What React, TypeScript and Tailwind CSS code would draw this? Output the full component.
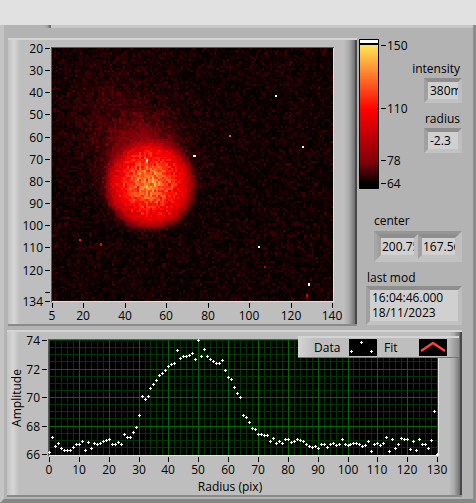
import React from 'react';

type Rgb = [number, number, number];

const COLOR_STOPS: { at: number; rgb: Rgb }[] = [
  { at: 64, rgb: [0, 0, 0] },
  { at: 78, rgb: [128, 0, 10] },
  { at: 110, rgb: [255, 0, 0] },
  { at: 150, rgb: [255, 232, 84] },
];

const colorFor = (value: number) => {
  if (value > 151) return 'rgb(255,255,255)';
  if (value <= 64) return 'rgb(0,0,0)';
  for (let i = 1; i < COLOR_STOPS.length; i++) {
    const a = COLOR_STOPS[i - 1];
    const b = COLOR_STOPS[i];
    if (value <= b.at) {
      const t = (value - a.at) / (b.at - a.at);
      return `rgb(${a.rgb.map((c, k) => Math.round(c + (b.rgb[k] - c) * t)).join(',')})`;
    }
  }
  return 'rgb(255,232,84)';
};

const COLS = 135;
const ROWS = 114;
const HOT_PIXELS: [number, number, number][] = [
  [107, 21, 160], [120, 44, 160], [68, 48, 160], [45, 50, 160], [99, 89, 160], [123, 106, 160],
  [13, 86, 115], [23, 88, 110], [102, 98, 95], [122, 111, 100], [85, 39, 124],
];

// Small seeded generator so that every frame shows the same noise
const createRandom = (seed: number) => () => {
  seed = (seed + 0x6d2b79f5) | 0;
  let t = Math.imul(seed ^ (seed >>> 15), 1 | seed);
  t = (t + Math.imul(t ^ (t >>> 7), 61 | t)) ^ t;
  return ((t ^ (t >>> 14)) >>> 0) / 4294967296;
};

const buildFrame = () => {
  const random = createRandom(18);
  const paths = new Map<number, string>();
  for (let row = 0; row < ROWS; row++) {
    for (let col = 0; col < COLS; col++) {
      const x = col * 2.08;
      const y = row * 2.22;
      const r = Math.hypot(x - 97, y - 136);
      const noise = random() + random() + random() - 1.5;
      const halo = 18 * Math.exp(-((x - 91) ** 2 + (y - 110) ** 2) / 1100);
      const haze = 4 * Math.exp(-((x - 62) ** 2 + (y - 66) ** 2) / 2400);
      const edge = 1 / (1 + Math.exp((r - 42) / 2.4));
      const disc = edge * (26 + 36 * Math.exp(-(r * r) / 1000));
      const gain = 4.4 + 0.13 * disc;
      let value = 65.8 + halo * (1 - edge * 0.7) + haze + disc + noise * gain;
      const hot = HOT_PIXELS.find(p => p[0] === col && p[1] === row);
      if (hot) value = hot[2];
      const level = Math.max(64, Math.round(value));
      const px = Math.round(x);
      const py = Math.round(y);
      const w = Math.round((col + 1) * 2.08) - px;
      const h = Math.round((row + 1) * 2.22) - py;
      paths.set(level, `${paths.get(level) ?? ''}M${px} ${py}h${w}v${h}h-${w}z`);
    }
  }
  paths.delete(64);
  return [...paths.entries()];
};

const frame = buildFrame();

// Radial profile, measured down from the top of the plot
const PROFILE = [
  112, 97, 106, 103, 108, 110, 110, 110, 107, 104, 104, 101, 110, 102, 108, 103, 104, 103, 101, 100,
  99, 104, 104, 102, 104, 94, 97, 97, 92, 87, 75, 56, 59, 56, 48, 44, 40, 35, 33, 30,
  26, 24, 23, 10, 18, 16, 16, 15, 13, 19, 0, 16, 9, 16, 19, 21, 23, 23, 20, 30,
  37, 39, 47, 53, 57, 75, 77, 82, 88, 89, 94, 94, 95, 95, 101, 98, 103, 101, 103, 99,
  99, 102, 101, 99, 100, 101, 104, 106, 107, 106, 108, 104, 104, 107, 104, 103, 105, 104, 99, 104,
  105, 104, 103, 103, 104, 106, 105, 101, 111, 104, 103, 105, 103, 97, 111, 99, 108, 104, 98, 99,
  99, 109, 101, 110, 99, 104, 104, 108, 100, 71, 114,
];

const marker = (x: number, y: number) => `M${x - 1} ${y}h3v1h-3zM${x} ${y - 1}h1v3h-1z`;

const Panel: React.FC<{ children: React.ReactNode }> = ({ children }) => (
  <div className="flex border-t-2 border-b-2 border-t-[#d4d4d4] border-b-[#8a8a8a] bg-[#bebebe]">
    <div className="w-3 shrink-0 bg-linear-to-r from-[#c2c2c2] via-[#d6d6d6] to-[#bebebe]" />
    <div className="min-w-0 flex-1">{children}</div>
    <div className="w-3.5 shrink-0 border-r-2 border-[#484848] bg-linear-to-r from-[#c2c2c2] via-[#aaaaaa] to-[#707070]" />
  </div>
);

const IntensityImage: React.FC = () => {
  const yTicks = [20, 30, 40, 50, 60, 70, 80, 90, 100, 110, 120, 130, 134];
  const xTicks = [5, 20, 40, 60, 80, 100, 120, 140];
  return (
    <svg viewBox="0 0 323 284" className="block w-full overflow-visible text-[12px]" shapeRendering="crispEdges" role="img">
      <rect x="31" y="7" width="283" height="255" fill="#5a5a5a" />
      <rect x="32" y="8" width="282" height="254" fill="#e6dede" />
      <rect x="32" y="8" width="281" height="253" fill="#000" />
      <g transform="translate(32 8)">
        {frame.map(([level, d]) => <path key={level} d={d} fill={colorFor(level)} />)}
      </g>
      {yTicks.map(v => {
        const y = Math.round(8 + (v - 20) * 2.215);
        return (
          <g key={v}>
            <rect x="25" y={y} width="5" height="1" />
            {v !== 130 && <text x="23" y={y + 5} textAnchor="end">{v}</text>}
          </g>
        );
      })}
      {xTicks.map(v => {
        const x = Math.round(32 + (v - 5) * 2.075);
        return (
          <g key={v}>
            <rect x={x} y="263" width="1" height="5" />
            <text x={x} y="280" textAnchor="middle">{v}</text>
          </g>
        );
      })}
    </svg>
  );
};

const ColorScale: React.FC = () => {
  const ticks = [{ v: 150, y: 6 }, { v: 110, y: 69 }, { v: 78, y: 121 }, { v: 64, y: 144 }];
  return (
    <svg width="50" height="151" viewBox="0 0 50 151" className="block shrink-0 overflow-visible text-[12px]" shapeRendering="crispEdges" role="img">
      <defs>
        <linearGradient id="ramp" x1="0" y1="0" x2="0" y2="1">
          <stop offset="0" stopColor="#ffe854" />
          <stop offset="0.45" stopColor="#ff0000" />
          <stop offset="0.82" stopColor="#80000a" />
          <stop offset="0.97" stopColor="#000" />
        </linearGradient>
      </defs>
      <rect width="20" height="150" />
      <rect x="1" y="1" width="18" height="3" fill="#fff" />
      <rect x="1" y="6" width="18" height="143" fill="url(#ramp)" />
      {ticks.map(({ v, y }) => (
        <g key={v}>
          <rect x="22" y={y} width="5" height="1" />
          <text x="28" y={y + 5}>{v}</text>
        </g>
      ))}
    </svg>
  );
};

const ProfileChart: React.FC = () => {
  const minorX = Array.from({ length: 65 }, (_, i) => i * 2);
  const minorY = Array.from({ length: 16 }, (_, i) => i);
  const xTicks = Array.from({ length: 14 }, (_, i) => i * 10);
  const toX = (v: number) => Math.round(30 + v * 2.985);
  const toY = (i: number) => Math.round(8 + i * 7.13);
  return (
    <svg viewBox="0 0 429 163" className="block w-full overflow-visible text-[12px]" shapeRendering="crispEdges" role="img">
      <rect x="29" y="7" width="391" height="117" fill="#5a5a5a" />
      <rect x="30" y="8" width="390" height="116" fill="#e4e4e4" />
      <rect x="30" y="8" width="389" height="115" fill="#000" />
      {minorX.map(v => <rect key={v} x={toX(v)} y="8" width="1" height="115" fill="#003600" />)}
      {minorY.map(i => <rect key={i} x="30" y={toY(i)} width="389" height="1" fill="#003600" />)}
      {xTicks.map(v => <rect key={v} x={toX(v)} y="8" width="1" height="115" fill="#006a00" />)}
      {[4, 8, 12].map(i => <rect key={i} x="30" y={toY(i)} width="389" height="1" fill="#006a00" />)}
      <path d={PROFILE.map((y, i) => marker(toX(i), y + 8)).join('')} fill="#fff" />
      {[74, 72, 70, 68, 66].map((v, i) => (
        <g key={v}>
          <rect x="23" y={toY(i * 4)} width="5" height="1" />
          <text x="21" y={toY(i * 4) + 5} textAnchor="end">{v}</text>
        </g>
      ))}
      {xTicks.map(v => (
        <g key={v}>
          <rect x={toX(v)} y="125" width="1" height="5" />
          <text x={toX(v)} y="142" textAnchor="middle">{v}</text>
        </g>
      ))}
      <text x="211" y="159" textAnchor="middle">Radius (pix)</text>
      <text transform="translate(2 66) rotate(-90)" textAnchor="middle">Amplitude</text>
    </svg>
  );
};

const Legend: React.FC = () => (
  <div className="absolute top-1.5 right-[3px] flex h-[22px] w-[161px] items-center border-t-2 border-b border-t-[#d4d4d4] border-b-[#777777] bg-linear-to-r from-[#d4d4d4] via-[#bebebe] via-10% to-[#bebebe] pl-4">
    <span className="w-[35px]">Data</span>
    <svg width="28" height="17" viewBox="0 0 28 17" shapeRendering="crispEdges">
      <rect width="28" height="17" />
      <path d={marker(2, 12) + marker(12, 3) + marker(22, 12)} fill="#fff" />
    </svg>
    <span className="w-[42px] pl-[7px]">Fit</span>
    <svg width="28" height="17" viewBox="0 0 28 17">
      <rect width="28" height="17" />
      <path d="M2 12L14 4L26 12" fill="none" stroke="#ff4040" strokeWidth="2.5" />
    </svg>
    <div className="ml-px h-full flex-1 bg-linear-to-r from-[#bebebe] to-[#8c8c8c]" />
  </div>
);

const fieldClass = 'block border-4 border-t-[#8e8e8e] border-l-[#a0a0a0] border-r-[#bebebe] border-b-[#c2c2c2] bg-[#d0d0d0] text-[12px] text-black outline-none';

const NumberField: React.FC<{ id: string; label: string; value: string }> = ({ id, label, value }) => (
  <div className="flex flex-col items-end">
    <label htmlFor={id} className="pr-0.5 leading-4">{label}</label>
    <input id={id} readOnly defaultValue={value} className={`${fieldClass} mt-px h-[25px] w-[38px] pl-0.5`} />
  </div>
);

const App: React.FC = () => (
  <div className="bg-[#b3b3b3] font-['Open_Sans','Noto_Sans',sans-serif] text-[12px] text-black">
    <header className="h-[25px] bg-[#e1e1e1]" />
    <main className="border-r-[3px] border-b-4 border-l-4 border-r-[#8c8c8c] border-b-[#868686] border-l-[#c4c4c4]">
      <div className="mb-2.5 flex h-[3px]">
        <div className="ml-10 w-[7px] bg-linear-to-r from-[#b3b3b3] via-[#a0a0a0] to-[#606060]" />
        <div className="flex-1 bg-[#c8c8c8]" />
      </div>

      <div className="flex pl-1">
        <div className="min-w-0 flex-1">
          <Panel><IntensityImage /></Panel>
        </div>
        <div className="flex w-[116px] shrink-0 flex-col pt-px pr-[11px] pl-0.5">
          <div className="flex justify-between">
            <ColorScale />
            <div className="-ml-4 flex flex-col gap-2 pt-[22px]">
              <NumberField id="intensity" label="intensity" value="380m" />
              <NumberField id="radius" label="radius" value="-2.3" />
            </div>
          </div>

          <fieldset className="mt-[23px] ml-[15px]">
            <legend className="leading-4">center</legend>
            <div className="mt-0.5 flex border-[3px] border-t-[#969696] border-r-[#c0c0c0] border-b-[#c2c2c2] border-l-[#a6a6a6] bg-[#adadad]">
              <input aria-label="center x" readOnly defaultValue="200.75" className={`${fieldClass} h-[25px] w-1/2 min-w-0 pl-px`} />
              <input aria-label="center y" readOnly defaultValue="167.56" className={`${fieldClass} h-[25px] w-1/2 min-w-0 pl-px`} />
            </div>
          </fieldset>

          <label htmlFor="last-mod" className="mt-2 ml-2 leading-4">last mod</label>
          <textarea
            id="last-mod"
            readOnly
            rows={2}
            defaultValue={'16:04:46.000\n18/11/2023'}
            className={`${fieldClass} ml-[7px] h-[39px] resize-none overflow-hidden pl-0.5 leading-[15px]`}
          />
        </div>
      </div>

      <div className="relative mt-1 mr-[11px] mb-0.5 ml-[3px]">
        <Panel><ProfileChart /></Panel>
        <Legend />
      </div>
    </main>
  </div>
);

export default App;
